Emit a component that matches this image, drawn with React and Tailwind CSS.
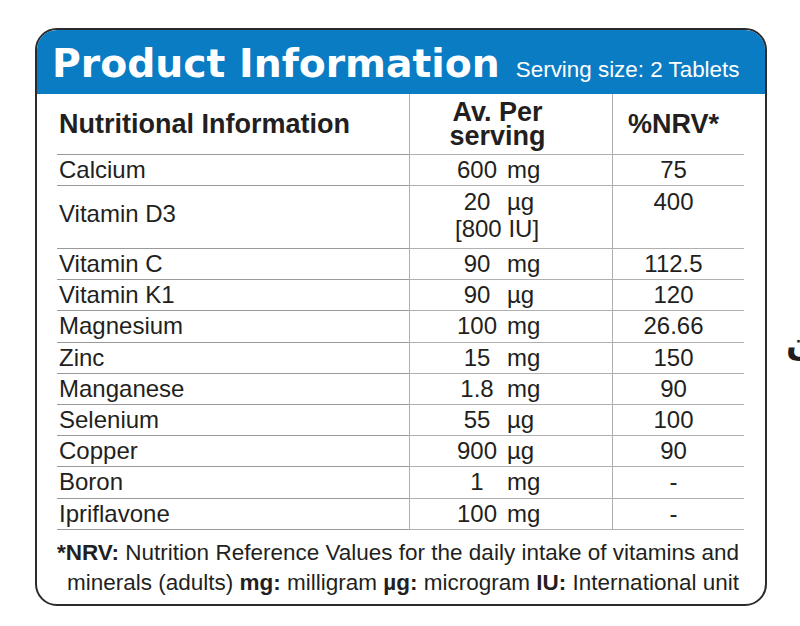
const rows = [
  { name: "Calcium", qty: "600", unit: "mg", nrv: "75", h: "h-[31px]" },
  { name: "Vitamin D3", qty: "20", unit: "µg", extra: "[800 IU]", nrv: "400", h: "h-[63px]" },
  { name: "Vitamin C", qty: "90", unit: "mg", nrv: "112.5", h: "h-[31px]" },
  { name: "Vitamin K1", qty: "90", unit: "µg", nrv: "120", h: "h-[31px]" },
  { name: "Magnesium", qty: "100", unit: "mg", nrv: "26.66", h: "h-[32px]" },
  { name: "Zinc", qty: "15", unit: "mg", nrv: "150", h: "h-[31px]" },
  { name: "Manganese", qty: "1.8", unit: "mg", nrv: "90", h: "h-[31px]" },
  { name: "Selenium", qty: "55", unit: "µg", nrv: "100", h: "h-[31px]" },
  { name: "Copper", qty: "900", unit: "µg", nrv: "90", h: "h-[31px]" },
  { name: "Boron", qty: "1", unit: "mg", nrv: "-", h: "h-[32px]" },
  { name: "Ipriflavone", qty: "100", unit: "mg", nrv: "-", h: "h-[31px]" },
];

const line = "border-b border-[#9a9a9a]";
const vline = "border-l border-[#b0b0b0]";

export default function App() {
  return (
    <div className="relative w-[800px] h-[626px] overflow-hidden bg-white text-[#231f20] font-['Liberation_Sans',Arial,sans-serif]">
      <div className="ml-[35px] mt-[28px] w-[732px] h-[578px] border-2 border-[#2b2b2b] rounded-[22px] overflow-hidden flex flex-col">
        {/* title bar */}
        <div className="h-[64px] shrink-0 bg-[#0a7cc4] flex items-baseline pt-[14px] pl-[15px] text-white">
          <span className="font-['DejaVu_Sans',sans-serif] font-bold text-[39.3px] leading-none">
            Product Information
          </span>
          <span className="ml-[16px] text-[22.4px] leading-none">Serving size: 2 Tablets</span>
        </div>

        {/* table */}
        <div className="ml-[20px] grid grid-cols-[352px_203px_132px]">
          <div className={`${line} h-[61px] flex items-center pl-[2px] font-bold text-[27px] leading-[23px]`}>
            Nutritional Information
          </div>
          <div className={`${line} ${vline} h-[61px] flex items-center justify-center pr-[27px] font-bold text-[27px] leading-[24px] text-center`}>
            Av. Per
            <br />
            serving
          </div>
          <div className={`${line} ${vline} h-[61px] flex items-center justify-center pr-[10px] font-bold text-[27px] leading-[23px]`}>
            %NRV*
          </div>

          {rows.map((r) => (
            <div key={r.name} className="contents">
              <div
                className={`${line} ${r.h} pl-[2px] text-[24px] ${
                  r.extra ? "pt-[14px] leading-[28px]" : "pt-[1px] leading-[28px]"
                }`}
              >
                {r.name}
              </div>
              <div className={`${line} ${vline} ${r.h} text-[24px] ${r.extra ? "pt-[2px] leading-[27px]" : "pt-[1px] leading-[28px]"}`}>
                <div className="flex pl-[37px]">
                  <span className="w-[60px] text-center">{r.qty}</span>
                  <span>{r.unit}</span>
                </div>
                {r.extra && <div className="pl-[45px]">{r.extra}</div>}
              </div>
              <div
                className={`${line} ${vline} ${r.h} text-center pr-[10px] text-[24px] ${
                  r.extra ? "pt-[2px] leading-[27px]" : "pt-[1px] leading-[28px]"
                }`}
              >
                {r.nrv}
              </div>
            </div>
          ))}
        </div>

        {/* footnote */}
        <div className="pt-[8px] text-[22.5px] leading-[30px] text-center">
          <div className="pr-[6px]">
            <b>*NRV:</b> Nutrition Reference Values for the daily intake of vitamins and
          </div>
          <div className="pl-[4px]">
            minerals (adults) <b>mg:</b> milligram <b>µg:</b> microgram <b>IU:</b> International unit
          </div>
        </div>
      </div>

      {/* cut-off glyph at the page edge */}
      <span className="absolute left-[786px] top-[326px] text-[34px] leading-none font-bold font-['DejaVu_Sans',sans-serif] text-[#231f20]">
        ن
      </span>
    </div>
  );
}
